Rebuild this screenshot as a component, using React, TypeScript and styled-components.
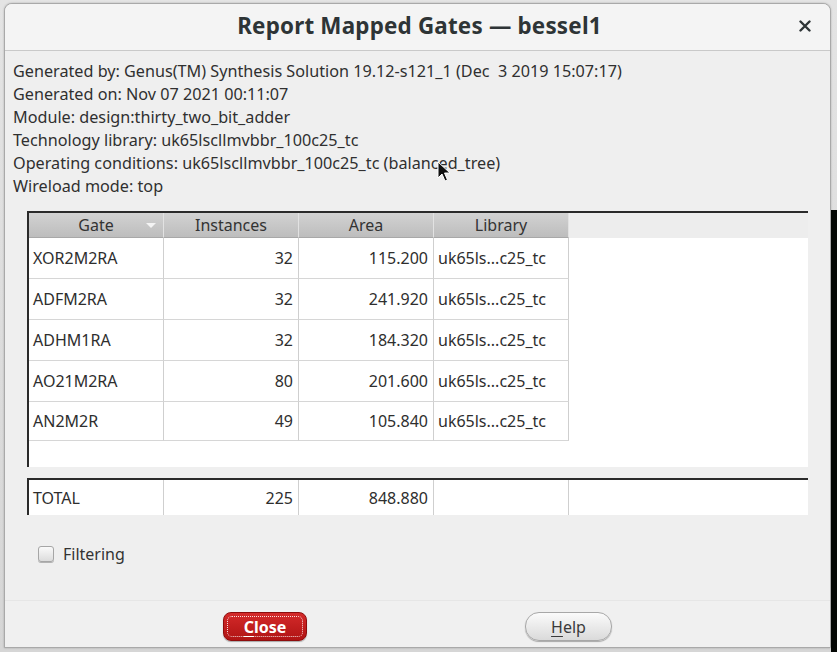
import React from "react";
import styled, { createGlobalStyle } from "styled-components";

const Global = createGlobalStyle`
  html, body { margin: 0; padding: 0; }
  body {
    width: 837px;
    height: 652px;
    overflow: hidden;
    font-family: "Noto Sans", "Open Sans", sans-serif;
    background:
      linear-gradient(to bottom, transparent 0, transparent 210px, #050805 210px) right top / 6px 100% no-repeat,
      linear-gradient(to bottom, #e4e4e4, #d6d6d6);
  }
`;

const Desktop = styled.div`
  padding: 3px 6px 4px 4px;
  height: 652px;
  box-sizing: border-box;
  display: flex;
`;

const Dialog = styled.div`
  position: relative;
  flex: 1;
  display: flex;
  flex-direction: column;
  background: #efefef;
  border: 1px solid #a9a9a9;
  border-radius: 8px 8px 0 0;
  box-shadow: 0 0 2px rgba(0, 0, 0, 0.25);
  overflow: hidden;
`;

const TitleBar = styled.div`
  height: 47px;
  flex: none;
  box-sizing: border-box;
  padding-bottom: 4px;
  display: flex;
  align-items: center;
  justify-content: center;
  position: relative;
  background: #f4f4f4;
  border-bottom: 1px solid #c9c9c9;
`;

const Title = styled.div`
  font-size: 22.4px;
  font-weight: 700;
  color: #2e3436;
  letter-spacing: 0.2px;
  padding-left: 4px;
`;

const CloseX = styled.div`
  position: absolute;
  right: 16px;
  top: 13px;
  width: 18px;
  height: 18px;
  display: flex;
  align-items: center;
  justify-content: center;
`;

const Body = styled.div`
  flex: 1;
  padding: 9px 0 0 8px;
  display: flex;
  flex-direction: column;
`;

const InfoLine = styled.div`
  font-size: 16.2px;
  line-height: 23px;
  height: 23px;
  color: #303030;
  white-space: pre;
`;

const TableFrame = styled.div<{ $fill?: boolean }>`
  margin: ${(p) => (p.$fill ? "13px" : "11px")} 22px 0 14px;
  border-top: 2px solid #2a2a2a;
  border-left: 2px solid #2a2a2a;
  background: #ffffff;
  display: flex;
  flex-direction: column;
  height: ${(p) => (p.$fill ? "254px" : "35px")};
`;

const Row = styled.div`
  display: grid;
  grid-template-columns: 135px 135px 135px 135px 1fr;
`;

const HeaderCell = styled.div<{ $blank?: boolean }>`
  height: 25px;
  box-sizing: border-box;
  position: relative;
  display: flex;
  align-items: center;
  justify-content: center;
  font-size: 16px;
  color: #333;
  background: ${(p) =>
    p.$blank ? "#ededed" : "linear-gradient(to bottom, #d2d2d2, #bdbdbd)"};
  border-right: ${(p) => (p.$blank ? "none" : "1px solid #e2e2e2")};
  border-bottom: ${(p) => (p.$blank ? "none" : "1px solid #a8a8a8")};
`;

const SortArrow = styled.span`
  position: absolute;
  right: 7px;
  top: 10px;
  width: 0;
  height: 0;
  border-left: 5px solid transparent;
  border-right: 5px solid transparent;
  border-top: 5px solid #f4f4f4;
`;

const Cell = styled.div<{ $align?: "left" | "right"; $h: number; $blank?: boolean }>`
  height: ${(p) => p.$h}px;
  box-sizing: border-box;
  display: flex;
  align-items: center;
  justify-content: ${(p) => (p.$align === "right" ? "flex-end" : "flex-start")};
  padding: 0 5px 0 4px;
  font-size: 16px;
  color: #2e2e2e;
  border-right: ${(p) => (p.$blank ? "none" : "1px solid #cfcfcf")};
  border-bottom: ${(p) => (p.$blank ? "none" : "1px solid #d6d6d6")};
`;

const TotalCell = styled(Cell)`
  border-bottom: none;
`;

const FilterRow = styled.label`
  display: flex;
  align-items: center;
  gap: 9px;
  margin: 28px 0 0 25px;
  font-size: 16px;
  color: #333;
`;

const Checkbox = styled.span`
  width: 14px;
  height: 14px;
  border: 1px solid #a6a6a6;
  border-radius: 3px;
  background: linear-gradient(to bottom, #fafafa, #dcdcdc);
  box-shadow: 0 1px 0 rgba(0, 0, 0, 0.25);
`;

const Footer = styled.div`
  height: 47px;
  flex: none;
  box-sizing: border-box;
  border-top: 1px solid #e6e6e6;
  background: #f0f0f0;
  display: flex;
  align-items: flex-start;
  padding: 11px 0 0 218px;
  gap: 218px;
`;

const Button = styled.button<{ $primary?: boolean }>`
  height: 29px;
  width: ${(p) => (p.$primary ? "84px" : "87px")};
  border-radius: ${(p) => (p.$primary ? "8px" : "14px")};
  font-family: "Noto Sans", "Open Sans", sans-serif;
  font-size: 16px;
  font-weight: ${(p) => (p.$primary ? 700 : 400)};
  color: ${(p) => (p.$primary ? "#ffffff" : "#3a3a3a")};
  border: 1px solid ${(p) => (p.$primary ? "#8e0d0d" : "#a8a8a8")};
  background: ${(p) =>
    p.$primary
      ? "linear-gradient(to bottom, #d42a2a, #b01414)"
      : "linear-gradient(to bottom, #fbfbfb, #dadada)"};
  box-shadow: 0 1px 1px rgba(0, 0, 0, 0.3);
  padding: 0;
  position: relative;
  display: flex;
  align-items: center;
  justify-content: center;
  u { text-decoration-thickness: 1px; text-underline-offset: 3px; }
`;

const FocusRing = styled.span`
  position: absolute;
  inset: 3px;
  border: 1px dotted rgba(255, 255, 255, 0.85);
  border-radius: 5px;
  pointer-events: none;
`;

const Cursor = styled.svg`
  position: absolute;
  left: 432px;
  top: 157px;
`;

const info = [
  "Generated by: Genus(TM) Synthesis Solution 19.12-s121_1 (Dec  3 2019 15:07:17)",
  "Generated on: Nov 07 2021 00:11:07",
  "Module: design:thirty_two_bit_adder",
  "Technology library: uk65lscllmvbbr_100c25_tc",
  "Operating conditions: uk65lscllmvbbr_100c25_tc (balanced_tree)",
  "Wireload mode: top",
];

const rows = [
  ["XOR2M2RA", "32", "115.200", "uk65ls...c25_tc"],
  ["ADFM2RA", "32", "241.920", "uk65ls...c25_tc"],
  ["ADHM1RA", "32", "184.320", "uk65ls...c25_tc"],
  ["AO21M2RA", "80", "201.600", "uk65ls...c25_tc"],
  ["AN2M2R", "49", "105.840", "uk65ls...c25_tc"],
];

export default function App() {
  return (
    <>
      <Global />
      <Desktop>
        <Dialog>
          <TitleBar>
            <Title>Report Mapped Gates — bessel1</Title>
            <CloseX>
              <svg width="12" height="12" viewBox="0 0 12 12">
                <path d="M1.5 1.5 L10.5 10.5 M10.5 1.5 L1.5 10.5" stroke="#2e3436" strokeWidth="2.4" strokeLinecap="round" />
              </svg>
            </CloseX>
          </TitleBar>
          <Body>
            {info.map((t) => (
              <InfoLine key={t}>{t}</InfoLine>
            ))}
            <TableFrame $fill>
              <Row>
                <HeaderCell>
                  Gate
                  <SortArrow />
                </HeaderCell>
                <HeaderCell>Instances</HeaderCell>
                <HeaderCell>Area</HeaderCell>
                <HeaderCell>Library</HeaderCell>
                <HeaderCell $blank />
              </Row>
              {rows.map((r, i) => (
                <Row key={r[0]}>
                  <Cell $h={i === 4 ? 39 : 41}>{r[0]}</Cell>
                  <Cell $h={i === 4 ? 39 : 41} $align="right">{r[1]}</Cell>
                  <Cell $h={i === 4 ? 39 : 41} $align="right">{r[2]}</Cell>
                  <Cell $h={i === 4 ? 39 : 41}>{r[3]}</Cell>
                  <Cell $h={i === 4 ? 39 : 41} $blank />
                </Row>
              ))}
            </TableFrame>
            <TableFrame>
              <Row>
                <TotalCell $h={35}>TOTAL</TotalCell>
                <TotalCell $h={35} $align="right">225</TotalCell>
                <TotalCell $h={35} $align="right">848.880</TotalCell>
                <TotalCell $h={35} />
                <TotalCell $h={35} $blank />
              </Row>
            </TableFrame>
            <FilterRow>
              <Checkbox />
              Filtering
            </FilterRow>
          </Body>
          <Footer>
            <Button $primary>
              <FocusRing />
              <span><u>C</u>lose</span>
            </Button>
            <Button>
              <span><u>H</u>elp</span>
            </Button>
          </Footer>
          <Cursor width="14" height="22" viewBox="0 0 14 22">
            <path d="M1 1 L1 17 L5 13 L8 20 L10.5 19 L7.5 12 L13 12 Z" fill="#111" stroke="#fff" strokeWidth="1" />
          </Cursor>
        </Dialog>
      </Desktop>
    </>
  );
}
